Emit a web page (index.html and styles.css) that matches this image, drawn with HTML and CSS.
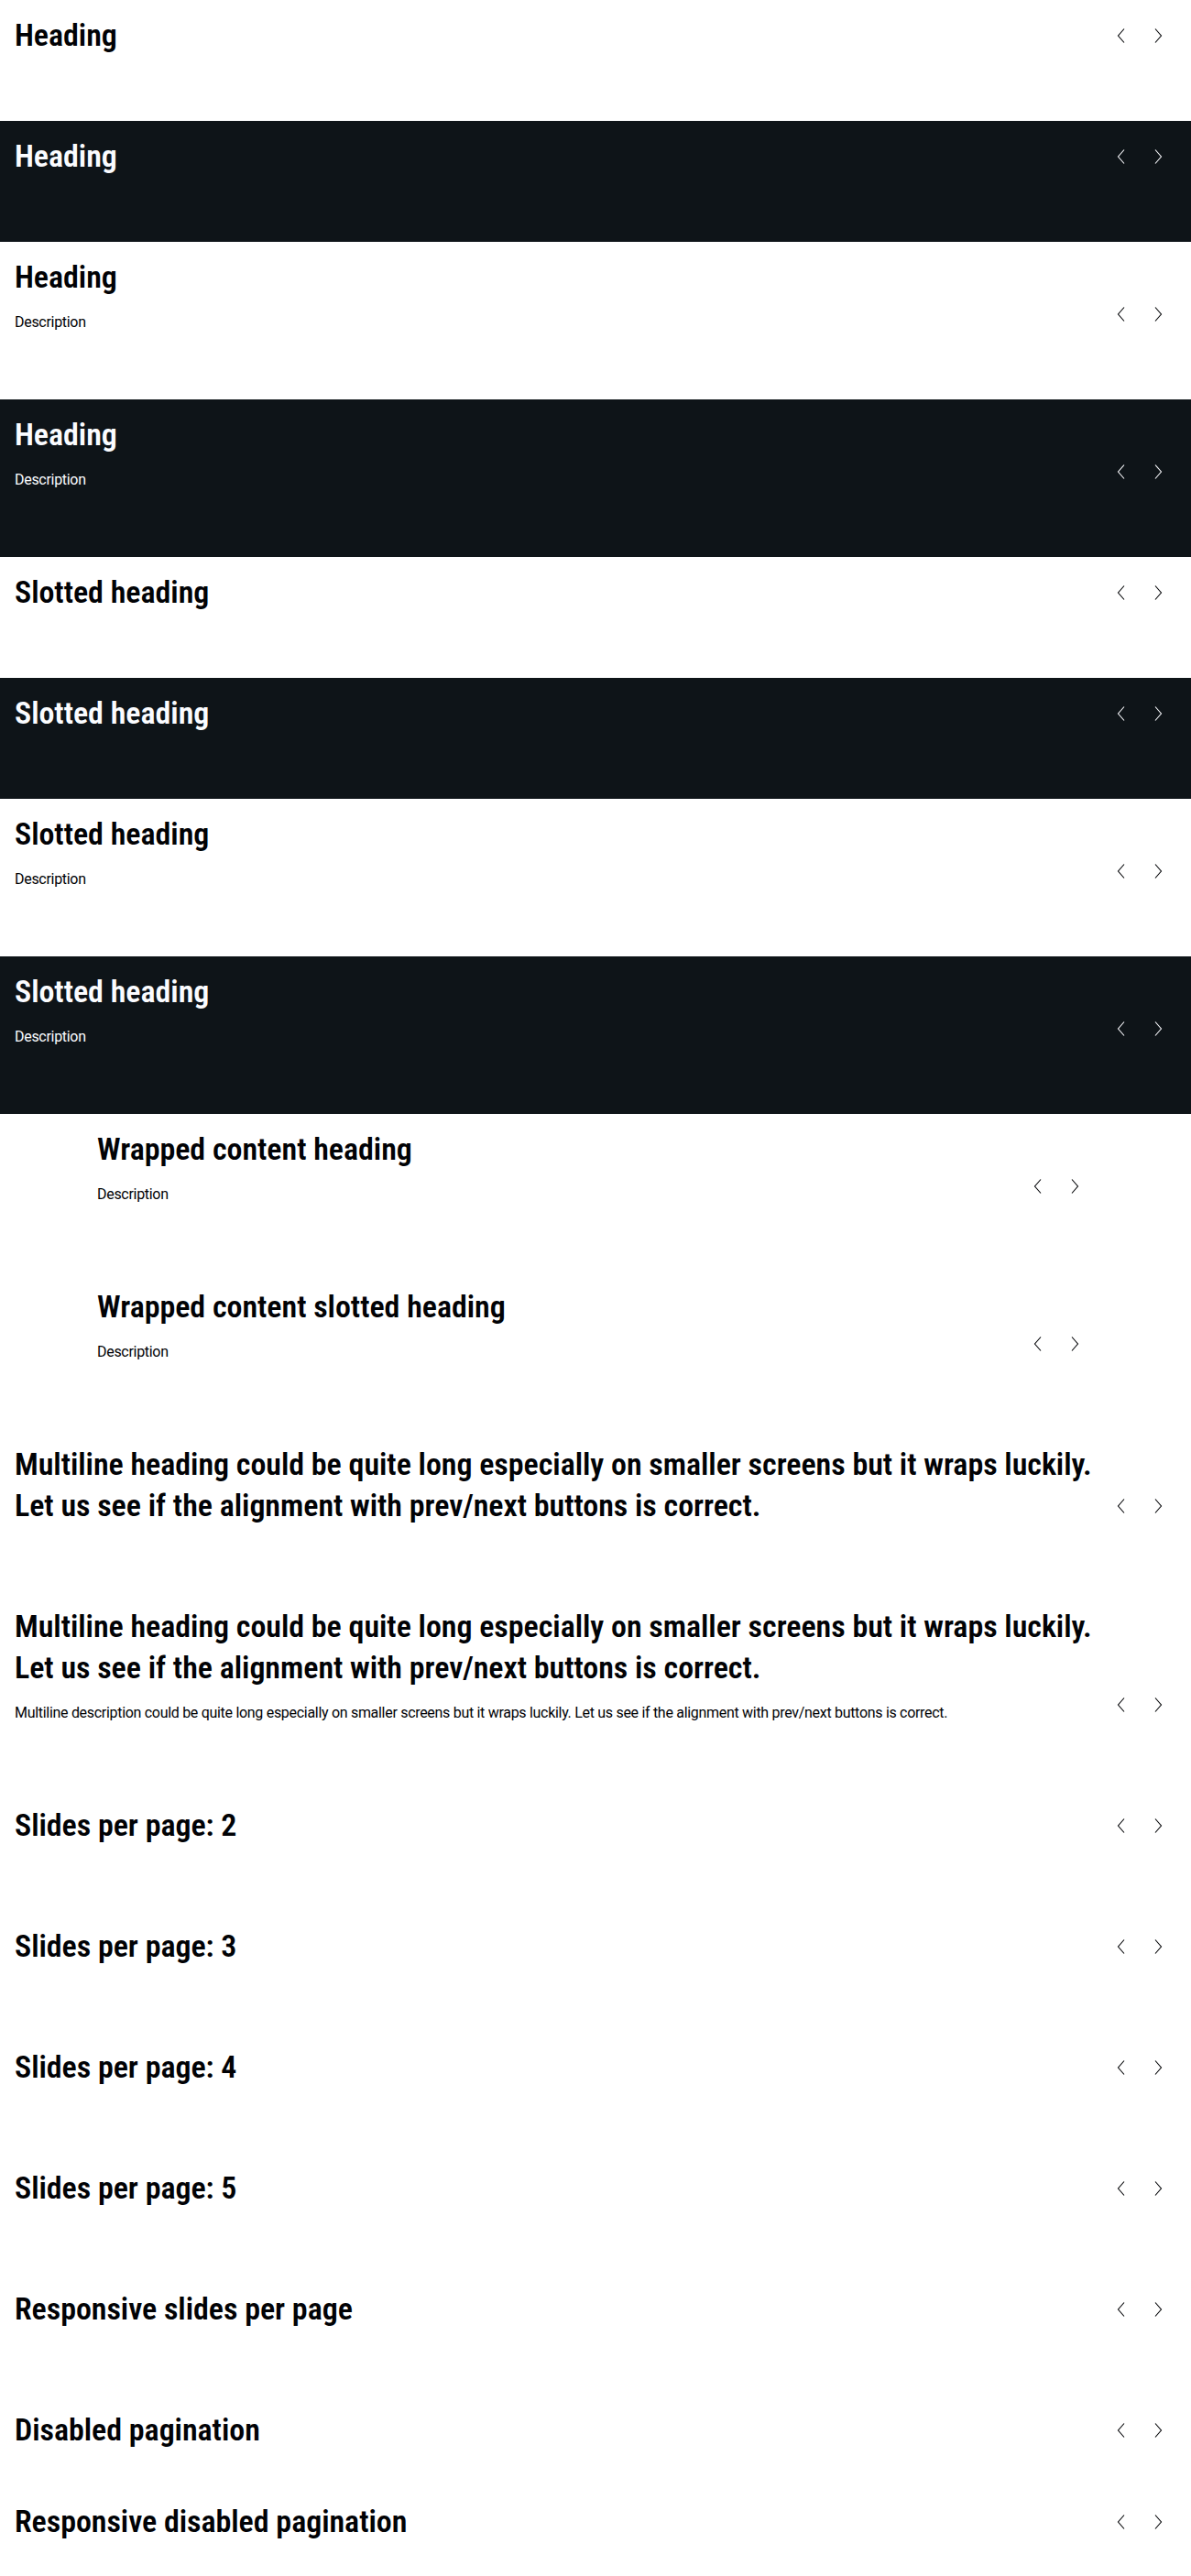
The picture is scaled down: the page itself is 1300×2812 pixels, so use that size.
FILE: index.html
```html
<!DOCTYPE html>
<html lang="en">
<head>
<meta charset="utf-8">
<title>Carousel</title>
<link rel="stylesheet" href="styles.css">
</head>
<body>
<svg width="0" height="0" class="defs" aria-hidden="true">
  <symbol id="prev" viewBox="0 0 24 24"><path d="M15 4.5 8.5 12 15 19.5" fill="none" stroke="currentColor" stroke-width="1.1"/></symbol>
  <symbol id="next" viewBox="0 0 24 24"><path d="M9 4.5 15.5 12 9 19.5" fill="none" stroke="currentColor" stroke-width="1.1"/></symbol>
</svg>

<section class="carousel">
  <div class="header"><div class="text"><h2 class="heading">Heading</h2></div>
  <div class="nav"><button class="btn"><svg><use href="#prev"/></svg></button><button class="btn"><svg><use href="#next"/></svg></button></div></div>
  <div class="track"></div><div class="pagination"></div>
</section>

<section class="carousel dark">
  <div class="header"><div class="text"><h2 class="heading">Heading</h2></div>
  <div class="nav"><button class="btn"><svg><use href="#prev"/></svg></button><button class="btn"><svg><use href="#next"/></svg></button></div></div>
  <div class="track"></div><div class="pagination"></div>
</section>

<section class="carousel">
  <div class="header"><div class="text"><h2 class="heading">Heading</h2><p class="desc">Description</p></div>
  <div class="nav"><button class="btn"><svg><use href="#prev"/></svg></button><button class="btn"><svg><use href="#next"/></svg></button></div></div>
  <div class="track"></div><div class="pagination"></div>
</section>

<section class="carousel dark">
  <div class="header"><div class="text"><h2 class="heading">Heading</h2><p class="desc">Description</p></div>
  <div class="nav"><button class="btn"><svg><use href="#prev"/></svg></button><button class="btn"><svg><use href="#next"/></svg></button></div></div>
  <div class="track"></div><div class="pagination"></div>
</section>

<section class="carousel">
  <div class="header"><div class="text"><h2 class="heading">Slotted heading</h2></div>
  <div class="nav"><button class="btn"><svg><use href="#prev"/></svg></button><button class="btn"><svg><use href="#next"/></svg></button></div></div>
  <div class="track"></div><div class="pagination"></div>
</section>

<section class="carousel dark">
  <div class="header"><div class="text"><h2 class="heading">Slotted heading</h2></div>
  <div class="nav"><button class="btn"><svg><use href="#prev"/></svg></button><button class="btn"><svg><use href="#next"/></svg></button></div></div>
  <div class="track"></div><div class="pagination"></div>
</section>

<section class="carousel">
  <div class="header"><div class="text"><h2 class="heading">Slotted heading</h2><p class="desc">Description</p></div>
  <div class="nav"><button class="btn"><svg><use href="#prev"/></svg></button><button class="btn"><svg><use href="#next"/></svg></button></div></div>
  <div class="track"></div><div class="pagination"></div>
</section>

<section class="carousel dark">
  <div class="header"><div class="text"><h2 class="heading">Slotted heading</h2><p class="desc">Description</p></div>
  <div class="nav"><button class="btn"><svg><use href="#prev"/></svg></button><button class="btn"><svg><use href="#next"/></svg></button></div></div>
  <div class="track"></div><div class="pagination"></div>
</section>

<section class="carousel wrapped">
  <div class="header"><div class="text"><h2 class="heading">Wrapped content heading</h2><p class="desc">Description</p></div>
  <div class="nav"><button class="btn"><svg><use href="#prev"/></svg></button><button class="btn"><svg><use href="#next"/></svg></button></div></div>
  <div class="track"></div><div class="pagination"></div>
</section>

<section class="carousel wrapped">
  <div class="header"><div class="text"><h2 class="heading">Wrapped content slotted heading</h2><p class="desc">Description</p></div>
  <div class="nav"><button class="btn"><svg><use href="#prev"/></svg></button><button class="btn"><svg><use href="#next"/></svg></button></div></div>
  <div class="track"></div><div class="pagination"></div>
</section>

<section class="carousel">
  <div class="header"><div class="text"><h2 class="heading">Multiline heading could be quite long especially on smaller screens but it wraps luckily.<br>Let us see if the alignment with prev/next buttons is correct.</h2></div>
  <div class="nav"><button class="btn"><svg><use href="#prev"/></svg></button><button class="btn"><svg><use href="#next"/></svg></button></div></div>
  <div class="track"></div><div class="pagination"></div>
</section>

<section class="carousel">
  <div class="header"><div class="text"><h2 class="heading">Multiline heading could be quite long especially on smaller screens but it wraps luckily.<br>Let us see if the alignment with prev/next buttons is correct.</h2><p class="desc">Multiline description could be quite long especially on smaller screens but it wraps luckily. Let us see if the alignment with prev/next buttons is correct.</p></div>
  <div class="nav"><button class="btn"><svg><use href="#prev"/></svg></button><button class="btn"><svg><use href="#next"/></svg></button></div></div>
  <div class="track"></div><div class="pagination"></div>
</section>

<section class="carousel">
  <div class="header"><div class="text"><h2 class="heading">Slides per page: 2</h2></div>
  <div class="nav"><button class="btn"><svg><use href="#prev"/></svg></button><button class="btn"><svg><use href="#next"/></svg></button></div></div>
  <div class="track"></div><div class="pagination"></div>
</section>

<section class="carousel">
  <div class="header"><div class="text"><h2 class="heading">Slides per page: 3</h2></div>
  <div class="nav"><button class="btn"><svg><use href="#prev"/></svg></button><button class="btn"><svg><use href="#next"/></svg></button></div></div>
  <div class="track"></div><div class="pagination"></div>
</section>

<section class="carousel">
  <div class="header"><div class="text"><h2 class="heading">Slides per page: 4</h2></div>
  <div class="nav"><button class="btn"><svg><use href="#prev"/></svg></button><button class="btn"><svg><use href="#next"/></svg></button></div></div>
  <div class="track"></div><div class="pagination"></div>
</section>

<section class="carousel">
  <div class="header"><div class="text"><h2 class="heading">Slides per page: 5</h2></div>
  <div class="nav"><button class="btn"><svg><use href="#prev"/></svg></button><button class="btn"><svg><use href="#next"/></svg></button></div></div>
  <div class="track"></div><div class="pagination"></div>
</section>

<section class="carousel">
  <div class="header"><div class="text"><h2 class="heading">Responsive slides per page</h2></div>
  <div class="nav"><button class="btn"><svg><use href="#prev"/></svg></button><button class="btn"><svg><use href="#next"/></svg></button></div></div>
  <div class="track"></div><div class="pagination"></div>
</section>

<section class="carousel">
  <div class="header"><div class="text"><h2 class="heading">Disabled pagination</h2></div>
  <div class="nav"><button class="btn"><svg><use href="#prev"/></svg></button><button class="btn"><svg><use href="#next"/></svg></button></div></div>
  <div class="track"></div>
</section>

<section class="carousel">
  <div class="header"><div class="text"><h2 class="heading">Responsive disabled pagination</h2></div>
  <div class="nav"><button class="btn"><svg><use href="#prev"/></svg></button><button class="btn"><svg><use href="#next"/></svg></button></div></div>
  <div class="track"></div>
</section>
</body>
</html>
```

FILE: styles.css
```css
html, body {
  margin: 0;
  padding: 0;
  background: #ffffff;
}

body {
  font-family: Roboto, "Liberation Sans", Arial, sans-serif;
  color: #010205;
}

.defs {
  position: absolute;
  width: 0;
  height: 0;
  overflow: hidden;
}

.carousel {
  display: flex;
  flex-direction: column;
  padding: 16px 16px 16px;
  background: #ffffff;
  color: #010205;
}

.carousel.dark {
  background: #0e1418;
  color: #fbfcff;
}

.carousel.wrapped {
  padding-left: 106px;
  padding-right: 107px;
}

.header {
  display: flex;
  align-items: flex-end;
  justify-content: space-between;
  gap: 4px;
}

.text {
  display: flex;
  flex-direction: column;
  gap: 14px;
  min-width: 0;
}

.heading {
  margin: 0;
  font-family: Roboto, "Liberation Sans", Arial, sans-serif;
  font-stretch: 80%;
  font-weight: 600;
  font-size: 34px;
  line-height: 45px;
  letter-spacing: -0.05px;
}

.desc {
  margin: 0;
  font-family: Roboto, "Liberation Sans", Arial, sans-serif;
  font-weight: 400;
  font-size: 16px;
  line-height: 26px;
  letter-spacing: -0.3px;
}

.nav {
  display: flex;
  flex: none;
  margin-bottom: 2px;
}

.btn {
  width: 40px;
  height: 40px;
  padding: 8px;
  margin: 0;
  border: 0;
  background: transparent;
  color: inherit;
  display: flex;
  align-items: center;
  justify-content: center;
}

.btn svg {
  width: 24px;
  height: 24px;
  display: block;
}

.track {
  height: 23px;
}

.pagination {
  height: 32px;
}
```
